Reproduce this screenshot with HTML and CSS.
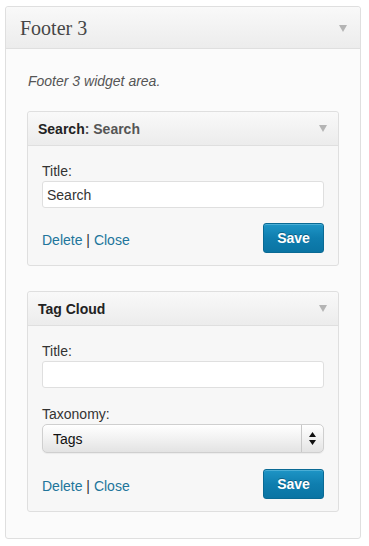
FILE: index.html
```html
<!DOCTYPE html>
<html>
<head>
<meta charset="utf-8">
<link rel="stylesheet" href="styles.css">
</head>
<body>
<div class="sidebar">
  <div class="sidebar-head">
    <h2 class="sidebar-title">Footer 3</h2>
    <span class="arrow arrow-lg"></span>
  </div>
  <div class="sidebar-body">
    <p class="desc">Footer 3 widget area.</p>

    <div class="widget">
      <div class="widget-head">
        <h4 class="widget-title">Search<span class="in-title">: Search</span></h4>
        <span class="arrow"></span>
      </div>
      <div class="widget-body">
        <div class="field field-last">
          <label class="label">Title:</label>
          <input class="text" type="text" value="Search">
        </div>
        <div class="actions">
          <div class="links"><a href="#">Delete</a> | <a href="#">Close</a></div>
          <button class="save">Save</button>
        </div>
      </div>
    </div>

    <div class="widget">
      <div class="widget-head">
        <h4 class="widget-title">Tag Cloud</h4>
        <span class="arrow"></span>
      </div>
      <div class="widget-body">
        <div class="field">
          <label class="label">Title:</label>
          <input class="text" type="text" value="">
        </div>
        <div class="field field-select">
          <label class="label">Taxonomy:</label>
          <div class="select-wrap">
            <select class="select"><option>Tags</option></select>
            <span class="select-btn">
              <svg width="7" height="13" viewBox="0 0 7 13"><path d="M3.5 0L7 5H0z M0 8h7L3.5 13z" fill="#111"/></svg>
            </span>
          </div>
        </div>
        <div class="actions">
          <div class="links"><a href="#">Delete</a> | <a href="#">Close</a></div>
          <button class="save">Save</button>
        </div>
      </div>
    </div>
  </div>
</div>
</body>
</html>
```

FILE: styles.css
```css
html, body {
  margin: 0;
  padding: 0;
  background: #ffffff;
}
body {
  font-family: "Liberation Sans", Arial, sans-serif;
  font-size: 14px;
  color: #333;
}
.sidebar {
  margin: 6px 8px 8px 5px;
  border: 1px solid #dfdfdf;
  border-radius: 3px;
  background: #fbfbfb;
}
.sidebar-head {
  height: 41px;
  display: flex;
  align-items: center;
  justify-content: space-between;
  padding: 0 13px 0 14px;
  border-bottom: 1px solid #dfdfdf;
  background: linear-gradient(#f9f9f9, #ececec);
  border-radius: 3px 3px 0 0;
}
.sidebar-title {
  margin: 0;
  font-family: "Liberation Serif", "Times New Roman", serif;
  font-weight: normal;
  font-size: 20px;
  color: #464646;
  padding-top: 2px;
}
.arrow {
  width: 0;
  height: 0;
  border-left: 4px solid transparent;
  border-right: 4px solid transparent;
  border-top: 7px solid #b4b4b4;
}
.arrow-lg {
  border-left-width: 4.5px;
  border-right-width: 4.5px;
  margin-top: 1px;
}
.sidebar-body {
  padding: 24px 21px 26px 21px;
}
.desc {
  margin: 0 0 22px 1px;
  font-style: italic;
  font-size: 14px;
  line-height: 16px;
  color: #555;
}
.widget {
  border: 1px solid #dfdfdf;
  border-radius: 3px;
  background: #f7f7f7;
}
.widget + .widget {
  margin-top: 25px;
}
.widget-head {
  height: 33px;
  display: flex;
  align-items: center;
  justify-content: space-between;
  padding: 0 11px 0 10px;
  border-bottom: 1px solid #dfdfdf;
  background: linear-gradient(#f9f9f9, #ececec);
  border-radius: 3px 3px 0 0;
}
.widget-title {
  margin: 0;
  font-size: 14px;
  font-weight: bold;
  color: #222;
}
.in-title {
  color: #555;
}
.widget-body {
  padding: 17px 14px 12px 14px;
}
.field {
  margin-bottom: 18px;
}
.field-last {
  margin-bottom: 15px;
}
.field-select {
  margin-bottom: 16px;
}
.label {
  display: block;
  line-height: 16px;
  margin-bottom: 2px;
  color: #333;
}
.text {
  display: block;
  box-sizing: border-box;
  width: 100%;
  height: 27px;
  margin: 0;
  padding: 0 4px;
  border: 1px solid #dfdfdf;
  border-radius: 3px;
  background: #fff;
  font-family: "Liberation Sans", Arial, sans-serif;
  font-size: 14px;
  color: #333;
  outline: none;
}
.select-wrap {
  position: relative;
  height: 29px;
  margin-top: 2px;
}
.select {
  -webkit-appearance: none;
  appearance: none;
  box-sizing: border-box;
  width: 100%;
  height: 29px;
  margin: 0;
  padding: 0 0 0 10px;
  border: 1px solid #cfcfcf;
  border-radius: 5px;
  background: linear-gradient(#ffffff 0%, #f3f3f3 45%, #e3e3e3 100%);
  box-shadow: inset 0 1px 1px rgba(255,255,255,0.9), 0 1px 1px rgba(0,0,0,0.05);
  font-family: "Liberation Sans", Arial, sans-serif;
  font-size: 14px;
  color: #111;
  outline: none;
}
.select-btn {
  position: absolute;
  top: 1px;
  right: 1px;
  bottom: 1px;
  width: 21px;
  border-left: 1px solid #c8c8c8;
  display: flex;
  align-items: center;
  justify-content: center;
}
.actions {
  display: flex;
  align-items: center;
  justify-content: space-between;
}
.links {
  color: #333;
  padding-top: 3px;
}
.links a {
  color: #21759b;
  text-decoration: none;
}
.save {
  box-sizing: border-box;
  width: 61px;
  height: 30px;
  margin: 0;
  padding: 0;
  border: 1px solid #0a6a94;
  border-radius: 3px;
  background: linear-gradient(#1e95c6, #0f7eaf 50%, #0a74a3);
  box-shadow: inset 0 1px 0 rgba(120,200,230,0.5);
  color: #fff;
  font-family: "Liberation Sans", Arial, sans-serif;
  font-size: 14px;
  font-weight: bold;
  text-shadow: 0 -1px 0 rgba(0,0,0,0.3);
}
```
